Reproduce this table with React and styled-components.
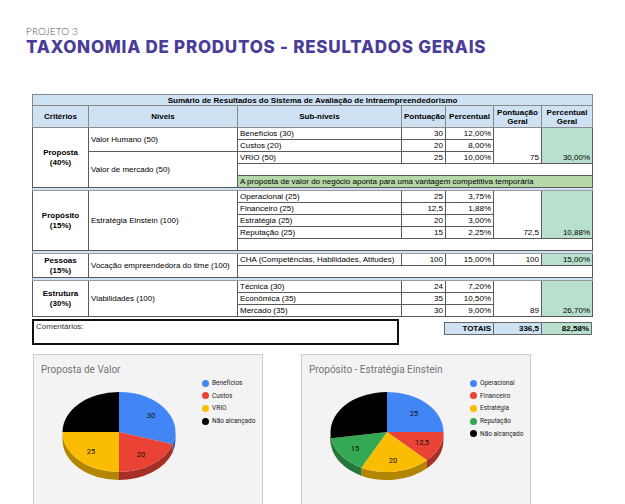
import React from "react";
import styled, { createGlobalStyle } from "styled-components";

const Global = createGlobalStyle`
  html, body { margin: 0; padding: 0; background: #fff; }
  body { font-family: "Liberation Sans", Arial, sans-serif; }
`;

const Page = styled.div`
  width: 625px;
  height: 504px;
  overflow: hidden;
  padding-top: 25px;
  box-sizing: border-box;
`;

const Header = styled.header`
  margin-left: 26px;
`;

const Kicker = styled.div`
  font-family: "Lato", "Open Sans", sans-serif;
  font-weight: 300;
  font-size: 10px;
  line-height: 12px;
  color: #555;
  letter-spacing: 0.1px;
`;

const Title = styled.h1`
  margin: 0;
  font-family: Inter, "Open Sans", sans-serif;
  font-weight: 800;
  font-size: 17px;
  line-height: 21px;
  letter-spacing: 0.75px;
  color: #4a3d98;
`;

const Sheet = styled.div`
  margin: 36px 0 0 32px;
  width: 560px;
`;

const Table = styled.table`
  border-collapse: collapse;
  table-layout: fixed;
  width: 560px;
  font-size: 8px;
  color: #000;
  border: 1px solid #666;
`;

const Cell = styled.td`
  border: 1px solid #5a5a5a;
  padding: 0 2px;
  height: 11px;
  line-height: 10px;
  white-space: nowrap;
  overflow: hidden;
  text-align: ${(p) => p.$align || "left"};
  vertical-align: ${(p) => p.$valign || "middle"};
  font-weight: ${(p) => (p.$bold ? "bold" : "normal")};
  background: ${(p) => p.$bg || "#fff"};
`;

const Head = styled(Cell).attrs({ as: "th" })`
  background: #cfe2f3;
  border-color: #8a8a8a;
  font-weight: bold;
  font-size: 8px;
  line-height: 9px;
  height: ${(p) => p.$h || 21}px;
  white-space: normal;
  text-align: center;
`;

const Gap = styled.td`
  height: 2px;
  padding: 0;
  font-size: 0;
  line-height: 0;
  background: #cfe2f3;
  border: 1px solid #9a9a9a;
`;

const Footer = styled.div`
  display: flex;
  align-items: flex-start;
  margin-top: 2px;
`;

const Comments = styled.div`
  width: 368px;
  height: 26px;
  box-sizing: border-box;
  border: 2px solid #111;
  font-size: 8px;
  line-height: 10px;
  padding: 1px 2px;
  color: #333;
`;

const Totals = styled.div`
  display: flex;
  margin: 3px 0 0 45px;
  border: 1px solid #666;
`;

const Total = styled.div`
  width: ${(p) => p.$w}px;
  height: 11px;
  line-height: 11px;
  box-sizing: border-box;
  padding: 0 2px;
  font-size: 8px;
  font-weight: bold;
  text-align: right;
  background: ${(p) => p.$bg};
  & + & { border-left: 1px solid #666; }
`;

const Charts = styled.div`
  display: flex;
  gap: 38px;
  margin: 9px 0 0 33px;
`;

const Card = styled.section`
  width: 230px;
  height: 160px;
  box-sizing: border-box;
  background: #f3f3f3;
  border: 1px solid #cccccc;
`;

const CardTitle = styled.div`
  padding: 9px 0 0 7px;
  font-family: Roboto, "Liberation Sans", sans-serif;
  font-size: 10px;
  line-height: 12px;
  color: #757575;
`;

const CardBody = styled.div`
  display: flex;
  align-items: flex-start;
`;

const Legend = styled.ul`
  list-style: none;
  margin: 1px 0 0 2px;
  padding: 0;
  font-family: Roboto, "Liberation Sans", sans-serif;
  font-size: 6.5px;
  color: #222;
`;

const LegendItem = styled.li`
  display: flex;
  align-items: center;
  gap: 3px;
  height: 12.6px;
`;

const Dot = styled.span`
  width: 7px;
  height: 7px;
  border-radius: 50%;
  background: ${(p) => p.$color};
`;

const BLUE = "#cfe2f3";
const GREEN = "#b7e1cd";

function pt(cx, cy, rx, ry, deg, dy = 0) {
  const r = (deg * Math.PI) / 180;
  return [cx + rx * Math.sin(r), cy - ry * Math.cos(r) + dy];
}

function Pie3D({ slices, labels }) {
  const cx = 85, cy = 56, rx = 56.5, ry = 40, depth = 8;
  const total = slices.reduce((s, x) => s + x.value, 0);
  let acc = 0;
  const arcs = slices.map((s) => {
    const a = (acc / total) * 360;
    acc += s.value;
    const b = (acc / total) * 360;
    return { ...s, a, b };
  });
  return (
    <svg width="166" height="110" viewBox="0 0 166 110">
      {arcs.map((s, i) => {
        const st = Math.max(s.a, 90), en = Math.min(s.b, 270);
        if (st >= en) return null;
        const p1 = pt(cx, cy, rx, ry, st), p2 = pt(cx, cy, rx, ry, en);
        const p3 = pt(cx, cy, rx, ry, en, depth), p4 = pt(cx, cy, rx, ry, st, depth);
        return (
          <path key={"s" + i} fill={s.side}
            d={`M${p1} A${rx} ${ry} 0 0 1 ${p2} L${p3} A${rx} ${ry} 0 0 0 ${p4} Z`} />
        );
      })}
      {arcs.map((s, i) => {
        const p1 = pt(cx, cy, rx, ry, s.a), p2 = pt(cx, cy, rx, ry, s.b);
        const large = s.b - s.a > 180 ? 1 : 0;
        return (
          <path key={"t" + i} fill={s.color}
            d={`M${cx} ${cy} L${p1} A${rx} ${ry} 0 ${large} 1 ${p2} Z`} />
        );
      })}
      {labels.map((l, i) => (
        <text key={i} x={cx + l.dx} y={cy + l.dy + 2.5} textAnchor="middle"
          fontSize="7.5" fontFamily="Roboto, Liberation Sans, sans-serif" fill="#111">
          {l.text}
        </text>
      ))}
    </svg>
  );
}

const C = {
  blue: { color: "#4285f4", side: "#2f5fae" },
  red: { color: "#ea4335", side: "#a52f26" },
  yellow: { color: "#fbbc04", side: "#b28503" },
  green: { color: "#34a853", side: "#247639" },
  black: { color: "#000000", side: "#000000" },
};

const proposta = [
  { name: "Benefícios", value: 30, ...C.blue },
  { name: "Custos", value: 20, ...C.red },
  { name: "VRIO", value: 25, ...C.yellow },
  { name: "Não alcançado", value: 25, ...C.black },
];

const proposito = [
  { name: "Operacional", value: 25, ...C.blue },
  { name: "Financeiro", value: 12.5, ...C.red },
  { name: "Estratégia", value: 20, ...C.yellow },
  { name: "Reputação", value: 15, ...C.green },
  { name: "Não alcançado", value: 27.5, ...C.black },
];

function Chart({ title, slices, labels }) {
  return (
    <Card>
      <CardTitle>{title}</CardTitle>
      <CardBody>
        <Pie3D slices={slices} labels={labels} />
        <Legend>
          {slices.map((s) => (
            <LegendItem key={s.name}>
              <Dot $color={s.color} />
              {s.name}
            </LegendItem>
          ))}
        </Legend>
      </CardBody>
    </Card>
  );
}

const Num = (props) => <Cell $align="right" {...props} />;

export default function App() {
  return (
    <Page>
      <Global />
      <Header>
        <Kicker>PROJETO 3</Kicker>
        <Title>TAXONOMIA DE PRODUTOS - RESULTADOS GERAIS</Title>
      </Header>

      <Sheet>
        <Table>
          <colgroup>
            <col style={{ width: 56 }} />
            <col style={{ width: 149 }} />
            <col style={{ width: 164 }} />
            <col style={{ width: 44 }} />
            <col style={{ width: 48 }} />
            <col style={{ width: 48 }} />
            <col style={{ width: 51 }} />
          </colgroup>
          <tbody>
            <tr>
              <Head colSpan={7} $h={10}>
                Sumário de Resultados do Sistema de Avaliação de Intraempreendedorismo
              </Head>
            </tr>
            <tr>
              <Head>Critérios</Head>
              <Head>Níveis</Head>
              <Head>Sub-níveis</Head>
              <Head>Pontuação</Head>
              <Head>Percentual</Head>
              <Head>Pontuação Geral</Head>
              <Head>Percentual Geral</Head>
            </tr>

            <tr>
              <Cell rowSpan={5} $align="center" $bold>Proposta<br />(40%)</Cell>
              <Cell rowSpan={2}>Valor Humano (50)</Cell>
              <Cell>Benefícios (30)</Cell>
              <Num>30</Num>
              <Num>12,00%</Num>
              <Num rowSpan={3} $valign="bottom">75</Num>
              <Num rowSpan={3} $valign="bottom" $bg={GREEN}>30,00%</Num>
            </tr>
            <tr>
              <Cell>Custos (20)</Cell>
              <Num>20</Num>
              <Num>8,00%</Num>
            </tr>
            <tr>
              <Cell rowSpan={3}>Valor de mercado (50)</Cell>
              <Cell>VRIO (50)</Cell>
              <Num>25</Num>
              <Num>10,00%</Num>
            </tr>
            <tr><Cell colSpan={5} /></tr>
            <tr>
              <Cell colSpan={5} $bg="#b6d7a8">
                A proposta de valor do negócio aponta para uma vantagem competitiva temporária
              </Cell>
            </tr>
            <tr><Gap colSpan={7} /></tr>

            <tr>
              <Cell rowSpan={5} $align="center" $bold>Propósito<br />(15%)</Cell>
              <Cell rowSpan={5}>Estratégia Einstein (100)</Cell>
              <Cell>Operacional (25)</Cell>
              <Num>25</Num>
              <Num>3,75%</Num>
              <Num rowSpan={4} $valign="bottom">72,5</Num>
              <Num rowSpan={4} $valign="bottom" $bg={GREEN}>10,88%</Num>
            </tr>
            <tr><Cell>Financeiro (25)</Cell><Num>12,5</Num><Num>1,88%</Num></tr>
            <tr><Cell>Estratégia (25)</Cell><Num>20</Num><Num>3,00%</Num></tr>
            <tr><Cell>Reputação (25)</Cell><Num>15</Num><Num>2,25%</Num></tr>
            <tr><Cell colSpan={5} /></tr>
            <tr><Gap colSpan={7} /></tr>

            <tr>
              <Cell rowSpan={2} $align="center" $bold>Pessoas<br />(15%)</Cell>
              <Cell rowSpan={2}>Vocação empreendedora do time (100)</Cell>
              <Cell>CHA (Competências, Habilidades, Atitudes)</Cell>
              <Num>100</Num>
              <Num>15,00%</Num>
              <Num>100</Num>
              <Num $bg={GREEN}>15,00%</Num>
            </tr>
            <tr><Cell colSpan={5} /></tr>
            <tr><Gap colSpan={7} /></tr>

            <tr>
              <Cell rowSpan={3} $align="center" $bold>Estrutura<br />(30%)</Cell>
              <Cell rowSpan={3}>Viabilidades (100)</Cell>
              <Cell>Técnica (30)</Cell>
              <Num>24</Num>
              <Num>7,20%</Num>
              <Num rowSpan={3} $valign="bottom">89</Num>
              <Num rowSpan={3} $valign="bottom" $bg={GREEN}>26,70%</Num>
            </tr>
            <tr><Cell>Econômica (35)</Cell><Num>35</Num><Num>10,50%</Num></tr>
            <tr><Cell>Mercado (35)</Cell><Num>30</Num><Num>9,00%</Num></tr>
          </tbody>
        </Table>

        <Footer>
          <Comments>Comentários:</Comments>
          <Totals>
            <Total $w={48} $bg={BLUE}>TOTAIS</Total>
            <Total $w={48} $bg={BLUE}>336,5</Total>
            <Total $w={50} $bg={GREEN}>82,58%</Total>
          </Totals>
        </Footer>
      </Sheet>

      <Charts>
        <Chart
          title="Proposta de Valor"
          slices={proposta}
          labels={[
            { text: "30", dx: 32, dy: -17 },
            { text: "20", dx: 22, dy: 22 },
            { text: "25", dx: -28, dy: 19 },
          ]}
        />
        <Chart
          title="Propósito - Estratégia Einstein"
          slices={proposito}
          labels={[
            { text: "25", dx: 27, dy: -19 },
            { text: "12,5", dx: 35, dy: 10 },
            { text: "20", dx: 6, dy: 28 },
            { text: "15", dx: -32, dy: 16 },
          ]}
        />
      </Charts>
    </Page>
  );
}
